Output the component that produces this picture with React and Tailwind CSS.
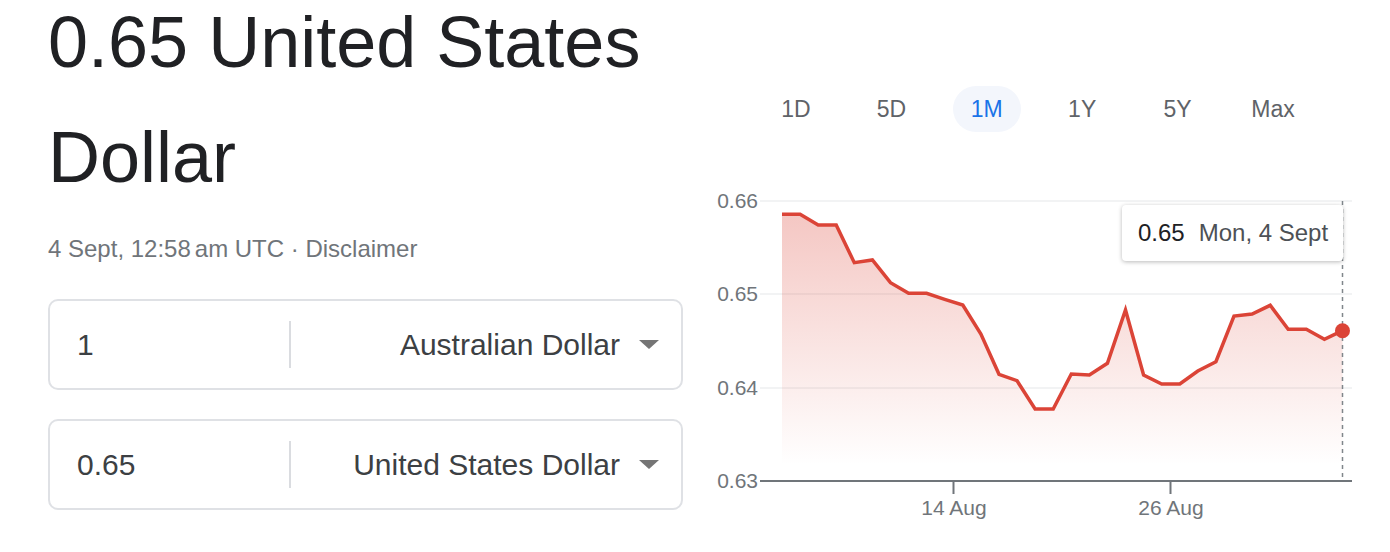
import React from 'react';

const font = 'font-[family-name:Liberation_Sans,Arial,sans-serif]';

// daily closing rates, converted to page y coords
const values = [
  214.3, 214.3, 225, 225, 262.7, 260, 282.7, 293.3, 293.3, 299.3, 305, 334, 374.3, 380.7, 409, 409,
  374, 375, 363.3, 310, 375, 384, 384, 371, 361.7, 316, 314, 305.3, 329.3, 329.3, 339.3, 330.7,
];

const ranges = ['1D', '5D', '1M', '1Y', '5Y', 'Max'];

const Caret = () => (
  <svg width="20" height="9" viewBox="0 0 20 9">
    <path d="M0 0 L20 0 L10 9 Z" fill="#757575" />
  </svg>
);

const ConverterBox = ({ amount, currency, className }) => (
  <div className={`h-[91px] flex items-center border-2 border-[#dfe1e5] rounded-[10px] ${className}`}>
    <div className="w-[239px] pl-[27px] text-[30px] text-[#3c4043]">{amount}</div>
    <div className="w-[2px] h-[47px] bg-[#dadce0]"></div>
    <div className="flex-1 flex items-center justify-end gap-[19px] pr-[22px]">
      <span className="text-[30px] text-[#3c4043]">{currency}</span>
      <Caret />
    </div>
  </div>
);

const Chart = () => {
  const pts = values.map((y, i) => [782 + i * 18.08, y]);
  const line = pts.map(([x, y], i) => `${i === 0 ? 'M' : 'L'}${x.toFixed(1)} ${y}`).join(' ');
  const last = pts[pts.length - 1];
  const area = `${line} L${last[0].toFixed(1)} 481 L782 481 Z`;
  const grid = [
    { y: 201, label: '0.66' },
    { y: 294, label: '0.65' },
    { y: 388, label: '0.64' },
  ];

  return (
    <div className="relative mt-[53px] w-[660px] h-[340px]">
      <svg width="660" height="340" viewBox="700 185 660 340">
        <defs>
          <linearGradient id="fade" gradientUnits="userSpaceOnUse" x1="0" y1="214" x2="0" y2="465">
            <stop offset="0" stopColor="#db4437" stopOpacity="0.3" />
            <stop offset="1" stopColor="#db4437" stopOpacity="0" />
          </linearGradient>
        </defs>
        {grid.map((g) => (
          <g key={g.label}>
            <line x1="760" x2="1352" y1={g.y} y2={g.y} stroke="#eeeff1" strokeWidth="1.5" />
            <text x="758" y={g.y + 7} textAnchor="end" fontSize="21" fill="#70757a" fontFamily="Liberation Sans, Arial, sans-serif">
              {g.label}
            </text>
          </g>
        ))}
        <text x="758" y="488" textAnchor="end" fontSize="21" fill="#70757a" fontFamily="Liberation Sans, Arial, sans-serif">
          0.63
        </text>
        <path d={area} fill="url(#fade)" />
        <line x1="1342.5" x2="1342.5" y1="201" y2="480" stroke="#80868b" strokeWidth="1.5" strokeDasharray="4 4" />
        <path d={line} fill="none" stroke="#db4437" strokeWidth="3.5" />
        <circle cx={last[0]} cy={last[1]} r="7.5" fill="#db4437" />
        <line x1="760" x2="1352" y1="481" y2="481" stroke="#70757a" strokeWidth="2" />
        <line x1="953.5" x2="953.5" y1="481" y2="494" stroke="#70757a" strokeWidth="2" />
        <line x1="1170.5" x2="1170.5" y1="481" y2="494" stroke="#70757a" strokeWidth="2" />
        <text x="954" y="515" textAnchor="middle" fontSize="21" fill="#70757a" fontFamily="Liberation Sans, Arial, sans-serif">
          14 Aug
        </text>
        <text x="1171" y="515" textAnchor="middle" fontSize="21" fill="#70757a" fontFamily="Liberation Sans, Arial, sans-serif">
          26 Aug
        </text>
      </svg>

      {/* hover tooltip */}
      <div className="absolute left-[422px] top-[20px] w-[221px] h-[56px] bg-white rounded-[4px] shadow-[0_1px_4px_rgba(0,0,0,0.28)] flex items-center pl-[16px] gap-[14px] text-[24px]">
        <span className="text-[#202124]">0.65</span>
        <span className="text-[#4d5156]">Mon, 4 Sept</span>
      </div>
    </div>
  );
};

const App = () => {
  return (
    <div className={`flex w-[1390px] h-[552px] overflow-hidden bg-white ${font}`}>
      {/* Converter */}
      <div className="ml-[48px] w-[635px] flex flex-col">
        <h1 className="mt-[-15.5px] text-[72px] leading-[115px] text-[#202124] font-normal">0.65 United States Dollar</h1>
        <p className="mt-[18px] text-[24px] leading-[32px] text-[#70757a]">
          4 Sept, 12:58<span className="ml-[4px]">am UTC · Disclaimer</span>
        </p>
        <ConverterBox amount="1" currency="Australian Dollar" className="mt-[34px]" />
        <ConverterBox amount="0.65" currency="United States Dollar" className="mt-[29px]" />
      </div>

      {/* Chart */}
      <div className="ml-[17px] w-[660px] pt-[86px] flex flex-col">
        <div className="flex pl-[62px] gap-[27.4px]">
          {ranges.map((r) => (
            <div
              key={r}
              className={`w-[68px] h-[46px] rounded-full flex items-center justify-center text-[23px] ${
                r === '1M' ? 'bg-[#f3f6fc] text-[#1a73e8]' : 'text-[#5f6368]'
              }`}
            >
              {r}
            </div>
          ))}
        </div>
        <Chart />
      </div>
    </div>
  );
};

export default App;
